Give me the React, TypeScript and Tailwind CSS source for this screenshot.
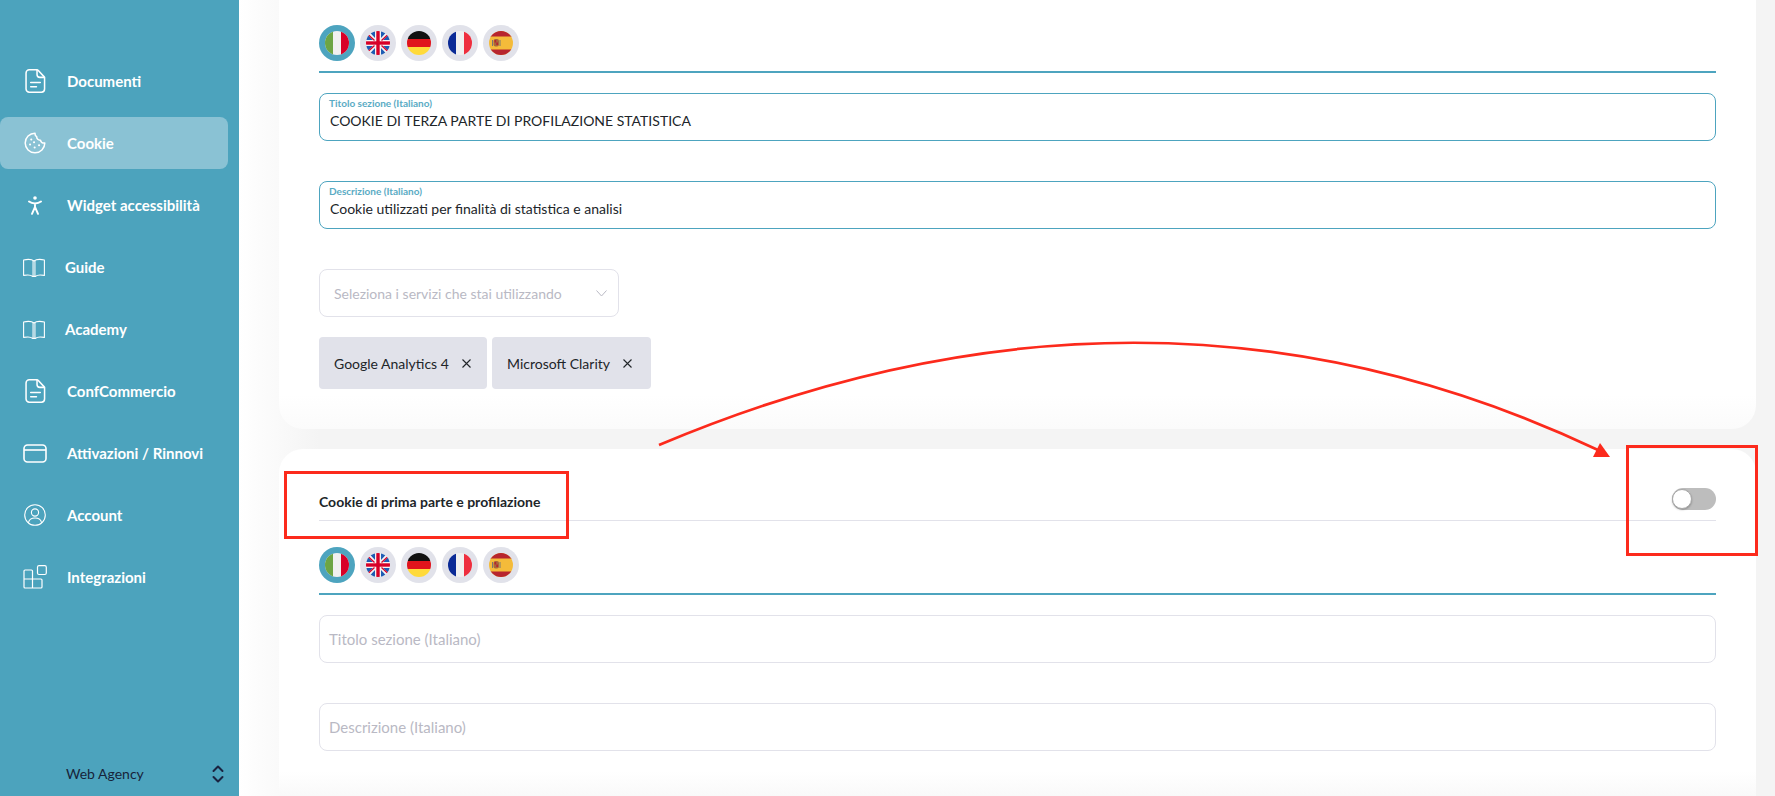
import React from "react";

const Doc = () => (
  <svg width="22" height="26" viewBox="0 0 22 26" fill="none" stroke="white" strokeWidth="1.6" strokeLinecap="round" strokeLinejoin="round">
    <path d="M4.500 1.200h7.800c.6 0 1 .2 1.400.6l6.200 6.600c.4.4.6.8.6 1.300v11.600c0 1.900-1.500 3.400-3.400 3.400H4.500c-1.900 0-3.400-1.500-3.400-3.400V4.600c0-1.900 1.500-3.400 3.400-3.400z" />
    <path d="M12.600 1.600v4.600c0 1.700 1.300 3 3 3h4.800" />
    <path d="M6 14.600h10M6 19h6" />
  </svg>
);
const Cookie = () => (
  <svg width="22" height="22" viewBox="0 0 22 22" fill="none" stroke="white" strokeWidth="1.500" strokeLinecap="round" strokeLinejoin="round">
    <path d="M11 1.200C5.600 1.200 1.200 5.600 1.200 11S5.600 20.800 11 20.800 20.800 16.400 20.800 11c-2.200.5-4-.7-4.300-2.800-2.200.2-3.900-1.400-3.800-3.500-1.200-.6-1.800-1.800-1.700-3.500z" />
    <path d="M7.200 7.400h.1M6 12.400h.1M10 10.200h.1M10.600 15.400h.1M15 13.200h.1" strokeWidth="2" />
  </svg>
);
const Person = () => (
  <svg width="14" height="19" viewBox="0 0 14 19" fill="none" stroke="white" strokeWidth="1.900" strokeLinecap="round" strokeLinejoin="round">
    <circle cx="7" cy="2" r="1.800" fill="white" stroke="none" />
    <path d="M1 5.600c1.600 1.200 3.700 1.900 6 1.900s4.400-.7 6-1.900M7 7.500v3.500M7 11l-3 6.800M7 11l3 6.800" />
  </svg>
);
const Book = () => (
  <svg width="22" height="19" viewBox="0 0 22 19" fill="none" stroke="white" strokeWidth="1.100" strokeLinejoin="round">
    <rect x="9.800" y="3" width="2.400" height="15" fill="white" fillOpacity="0.5" stroke="none" />
    <path d="M.6 2C5 1 8.800 1.300 11 3c2.200-1.700 6-2 10.400-1v15.400c-4.400-.8-7.600-.4-8.900 1H9.500c-1.300-1.400-4.500-1.800-8.900-1z" />
    <path d="M9.800 3v15M12.200 3v15" strokeOpacity="0.75" strokeWidth="0.800" />
  </svg>
);
const Card = () => (
  <svg width="24" height="19" viewBox="0 0 24 19" fill="none" stroke="white" strokeWidth="1.600" strokeLinejoin="round">
    <rect x="1" y="1" width="22" height="17" rx="3.500" />
    <path d="M1 6h22" />
  </svg>
);
const Account = () => (
  <svg width="22" height="22" viewBox="0 0 22 22" fill="none" stroke="white" strokeWidth="1.100" strokeLinecap="round">
    <circle cx="11" cy="11" r="10.300" />
    <circle cx="11" cy="8.500" r="3.600" />
    <path d="M4.500 18.500c.6-3 3-4.500 6.500-4.500s5.900 1.500 6.500 4.500" />
  </svg>
);
const Blocks = () => (
  <svg width="24" height="24" viewBox="0 0 24 24" fill="none" stroke="white" strokeWidth="1.200" strokeLinejoin="round">
    <rect x="14.500" y="0.700" width="8.800" height="8.800" rx="1.500" />
    <path d="M2 5h6.500c.6 0 1 .4 1 1v8H1V6c0-.6.4-1 1-1zM1 14h8.500v9H2c-.6 0-1-.4-1-1zM9.500 14H18c.6 0 1 .4 1 1v7c0 .6-.4 1-1 1H9.500z" />
  </svg>
);

const nav = [
  { label: "Documenti", icon: <Doc />, box: "w-[46px] pl-[25px]", gap: "ml-[21px]" },
  { label: "Cookie", icon: <Cookie />, box: "w-[46px] pl-[24px]", gap: "ml-[21px]", active: true },
  { label: "Widget accessibilità", icon: <Person />, box: "w-[46px] pl-[28px]", gap: "ml-[21px]" },
  { label: "Guide", icon: <Book />, box: "w-[46px] pl-[23px]", gap: "ml-[19px]" },
  { label: "Academy", icon: <Book />, box: "w-[46px] pl-[23px]", gap: "ml-[19px]" },
  { label: "ConfCommercio", icon: <Doc />, box: "w-[46px] pl-[25px]", gap: "ml-[21px]" },
  { label: "Attivazioni / Rinnovi", icon: <Card />, box: "w-[47px] pl-[23px]", gap: "ml-[20px]" },
  { label: "Account", icon: <Account />, box: "w-[46px] pl-[24px]", gap: "ml-[21px]" },
  { label: "Integrazioni", icon: <Blocks />, box: "w-[47px] pl-[23px]", gap: "ml-[20px]" },
];

const Flag = ({ children, active }: { children: React.ReactNode; active?: boolean }) => (
  <div className={`w-9 h-9 rounded-full p-[6px] ${active ? "bg-[#4da4bf]" : "bg-[#e1e2ea]"}`}>
    <svg viewBox="0 0 24 24" className="w-6 h-6 rounded-full block">{children}</svg>
  </div>
);

const UkQuarter = () => (
  <>
    <path d="M9 0v7L2.500 0zM0 9h7L0 2.500z" fill="#1e5cb3" />
    <path d="M2 3.500L8.500 9.500" stroke="#d80027" strokeWidth="1.300" />
  </>
);

const Flags = () => (
  <div className="flex gap-[5px]">
    <Flag active>
      <rect width="24" height="24" fill="#f0f0f0" />
      <rect width="8" height="24" fill="#6da544" />
      <rect x="16" width="8" height="24" fill="#d80027" />
    </Flag>
    <Flag>
      <rect width="24" height="24" fill="#f4f4f4" />
      <UkQuarter />
      <g transform="matrix(-1 0 0 1 24 0)"><UkQuarter /></g>
      <g transform="matrix(1 0 0 -1 0 24)"><UkQuarter /></g>
      <g transform="matrix(-1 0 0 -1 24 24)"><UkQuarter /></g>
      <rect x="10.300" width="3.400" height="24" fill="#d80027" />
      <rect y="10.300" width="24" height="3.400" fill="#d80027" />
    </Flag>
    <Flag>
      <rect width="24" height="8" fill="#111111" />
      <rect y="8" width="24" height="8" fill="#e0141c" />
      <rect y="16" width="24" height="8" fill="#ffda3a" />
    </Flag>
    <Flag>
      <rect width="24" height="24" fill="#f0f0f0" />
      <rect width="8" height="24" fill="#0a2a96" />
      <rect x="16" width="8" height="24" fill="#ee2e3e" />
    </Flag>
    <Flag>
      <rect width="24" height="24" fill="#f4bb3a" />
      <rect width="24" height="5.500" fill="#b7252f" />
      <rect y="18.500" width="24" height="5.500" fill="#b7252f" />
      <rect x="4.500" y="8" width="5.500" height="7.500" rx="2" fill="#a8683a" />
      <rect x="5.500" y="9" width="1.700" height="2.500" fill="#b7252f" />
      <rect x="7.300" y="11.500" width="1.700" height="2.500" fill="#b7252f" />
      <rect x="3" y="9" width="1" height="6" fill="#777777" />
      <rect x="10.500" y="9" width="1" height="6" fill="#777777" />
    </Flag>
  </div>
);

const Filled = ({ label, value }: { label: string; value: string }) => (
  <div className="h-12 rounded-lg border border-[#4da4bf] bg-white pl-[10px] flex flex-col">
    <span className="-ml-px text-[10px] leading-[12px] mt-[3px] font-bold text-[#5aabc4]">{label}</span>
    <span className="text-[14px] leading-[20px] mt-[2px] text-[#212529]">{value}</span>
  </div>
);

const Empty = ({ label, className = "" }: { label: string; className?: string }) => (
  <div className={`h-12 rounded-lg border border-[#e2e2ea] bg-white pl-[9px] flex items-center text-[15px] text-[#b9b9c4] ${className}`}>
    {label}
  </div>
);

const Chip = ({ label, className }: { label: string; className: string }) => (
  <div className={`h-[52px] rounded-[4px] bg-[#e1e2ea] flex items-center pl-[15px] text-[14px] text-[#212529] ${className}`}>
    <span>{label}</span>
    <svg width="9" height="9" viewBox="0 0 9 9" className="ml-[13px]" stroke="#212529" strokeWidth="1.100">
      <path d="M.5.500l8 8M8.500.500l-8 8" />
    </svg>
  </div>
);

export default function App() {
  return (
    <div className="relative flex h-[796px] overflow-hidden bg-white font-['Lato','Noto_Sans',sans-serif]">
      <aside className="w-[239px] shrink-0 bg-[#4ca3bd] flex flex-col pt-[55px]">
        <nav className="flex flex-col gap-[10px]">
          {nav.map((n) => (
            <div
              key={n.label}
              className={`w-[228px] h-[52px] flex items-center rounded-lg text-white font-bold text-[15px] ${n.active ? "bg-[#8ac2d4]" : ""}`}
            >
              <div className={`${n.box} shrink-0 flex items-center`}>{n.icon}</div>
              <span className={n.gap}>{n.label}</span>
            </div>
          ))}
        </nav>
        <div className="mt-auto mb-[12px] pl-[66px] pr-[15px] flex items-center justify-between text-[14px] text-[#17233a]">
          <span>Web Agency</span>
          <svg width="12" height="18" viewBox="0 0 12 18" fill="none" stroke="#1a2340" strokeWidth="2" strokeLinecap="round" strokeLinejoin="round">
            <path d="M1.500 6L6 1.500 10.500 6M1.500 12L6 16.500 10.500 12" />
          </svg>
        </div>
      </aside>

      <main className="flex-1 pl-10 pr-[19px] flex flex-col gap-5 bg-[linear-gradient(90deg,#ffffff_0px,#f4f4f4_80px)]">
        <section className="rounded-b-[24px] bg-[linear-gradient(180deg,#ffffff_92%,#fbfbfb_100%)] px-10 pt-[25px] pb-10">
          <Flags />
          <div className="mt-[10px] h-[2px] bg-[#4da4bf]" />
          <div className="mt-5">
            <Filled label="Titolo sezione (Italiano)" value="COOKIE DI TERZA PARTE DI PROFILAZIONE STATISTICA" />
          </div>
          <div className="mt-10">
            <Filled label="Descrizione (Italiano)" value="Cookie utilizzati per finalità di statistica e analisi" />
          </div>
          <div className="mt-10 w-[300px] h-12 rounded-lg border border-[#e2e2ea] bg-white pl-[14px] pr-[11px] flex items-center justify-between text-[14px] text-[#b9b9c4]">
            <span>Seleziona i servizi che stai utilizzando</span>
            <svg width="11" height="7" viewBox="0 0 11 7" fill="none" stroke="#b9b9c4" strokeWidth="1">
              <path d="M.500.500l5 5.500 5-5.500" />
            </svg>
          </div>
          <div className="mt-5 flex gap-[5px]">
            <Chip label="Google Analytics 4" className="w-[168px]" />
            <Chip label="Microsoft Clarity" className="w-[159px]" />
          </div>
        </section>

        <section className="flex-1 rounded-t-[24px] bg-[linear-gradient(180deg,#ffffff_93%,#f9f9f9_100%)] px-10">
          <div className="h-[72px] border-b border-[#e2e2ea] flex items-end justify-between pb-[8px]">
            <span className="font-bold text-[14px] leading-[20px] text-[#212529]">Cookie di prima parte e profilazione</span>
            <div className="relative w-11 h-[22px] mb-[2px] rounded-full bg-[#bdbdbd]">
              <div className="absolute left-0 top-px w-5 h-5 rounded-full bg-white border border-[#a8a8a8] shadow-[0_1px_2px_rgba(0,0,0,0.25)]" />
            </div>
          </div>
          <div className="mt-[26px]">
            <Flags />
          </div>
          <div className="mt-[10px] h-[2px] bg-[#4da4bf]" />
          <Empty label="Titolo sezione (Italiano)" className="mt-5" />
          <Empty label="Descrizione (Italiano)" className="mt-10" />
        </section>
      </main>

      <div className="absolute left-[284px] top-[471px] w-[285px] h-[68px] border-[3px] border-[#fc2a1c]" />
      <div className="absolute left-[1626px] top-[445px] w-[132px] h-[111px] border-[3px] border-[#fc2a1c]" />
      <svg className="absolute left-0 top-0 pointer-events-none" width="1775" height="796" fill="none">
        <path d="M659 445Q1150 238 1598 450" stroke="#fc2a1c" strokeWidth="2.700" />
        <path d="M1600 443L1610 457H1593Z" fill="#fc2a1c" />
      </svg>
    </div>
  );
}
